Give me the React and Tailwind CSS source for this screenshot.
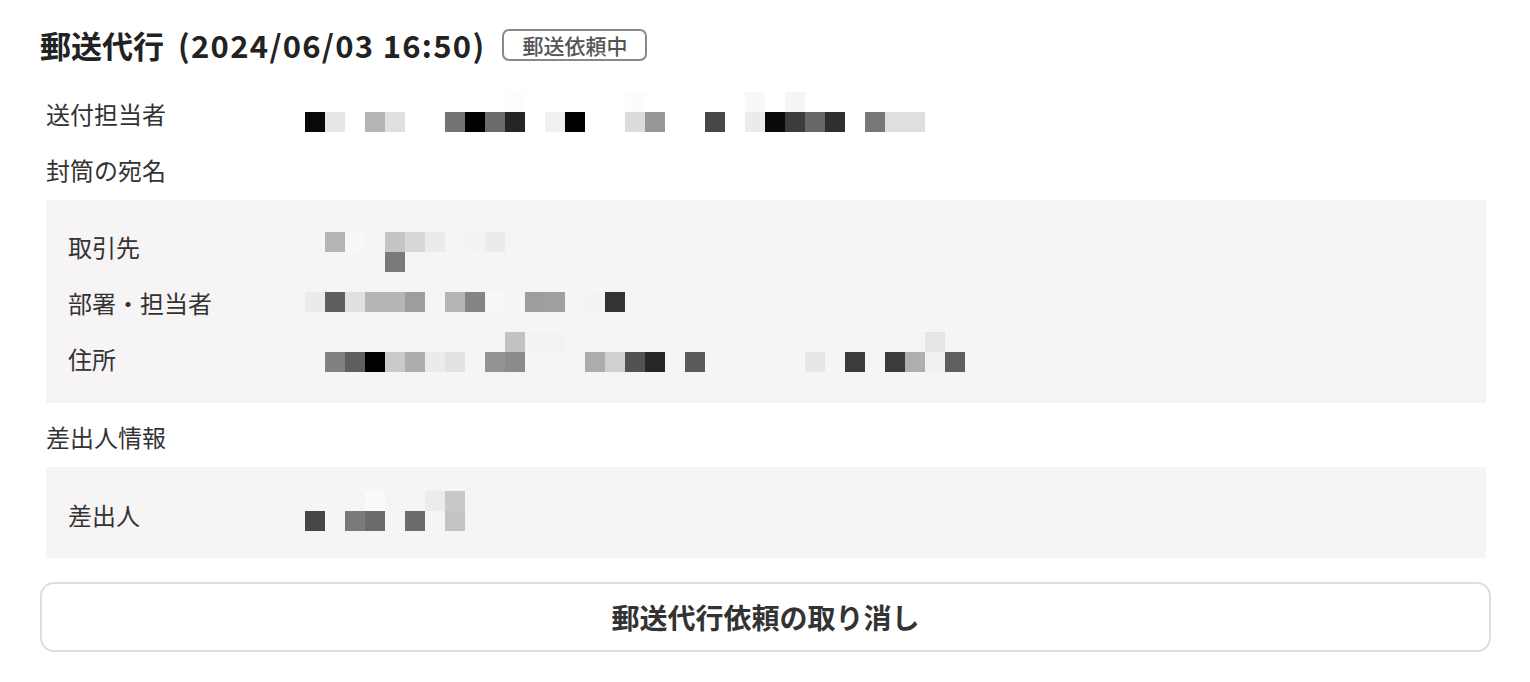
import React from "react";

// mosaic cells, 20px each, null = empty
const sender = [
  [null, null, null, null, null, null, null, null, null, null, "bg-[#fdfdfd]", null, null, null, null, null, "bg-[#fcfcfc]", null, null, null, null, null, "bg-[#f8f8f8]", null, "bg-[#f5f5f5]"],
  ["bg-[#080808]", "bg-[#e6e6e6]", null, "bg-[#b5b5b5]", "bg-[#e0e0e0]", null, null, "bg-[#747474]", "bg-[#000000]", "bg-[#6b6b6b]", "bg-[#252525]", null, "bg-[#f0f0f0]", "bg-[#000000]", null, null, "bg-[#dcdcdc]", "bg-[#979797]", null, null, "bg-[#474747]", null, "bg-[#ebebeb]", "bg-[#0a0a0a]", "bg-[#3c3c3c]", "bg-[#676767]", "bg-[#2f2f2f]", null, "bg-[#777777]", "bg-[#dfdfdf]", "bg-[#dfdfdf]"],
];

const client = [
  [null, "bg-[#b5b5b5]", "bg-[#f7f7f7]", null, "bg-[#c5c5c5]", "bg-[#d7d7d7]", "bg-[#ebebeb]", null, "bg-[#f3f3f3]", "bg-[#ebebeb]"],
  [null, null, null, null, "bg-[#7a7a7a]"],
];

const dept = [
  ["bg-[#ebebeb]", "bg-[#5f5f5f]", "bg-[#e0e0e0]", "bg-[#b5b5b5]", "bg-[#b5b5b5]", "bg-[#9d9d9d]", null, "bg-[#b5b5b5]", "bg-[#858585]", "bg-[#f7f7f7]", null, "bg-[#9d9d9d]", "bg-[#a0a0a0]", null, "bg-[#f3f3f3]", "bg-[#333333]"],
];

const address = [
  [null, null, null, null, null, null, null, null, null, null, "bg-[#c2c2c2]", "bg-[#f3f3f3]", "bg-[#f3f3f3]", null, null, null, null, null, null, null, null, null, null, null, null, null, null, null, null, null, null, "bg-[#e5e5e5]"],
  [null, "bg-[#818181]", "bg-[#5f5f5f]", "bg-[#000000]", "bg-[#cacaca]", "bg-[#adadad]", "bg-[#ebebeb]", "bg-[#e2e2e2]", null, "bg-[#939393]", "bg-[#8b8b8b]", null, null, null, "bg-[#acacac]", "bg-[#d0d0d0]", "bg-[#525252]", "bg-[#262626]", null, "bg-[#5a5a5a]", null, null, null, null, null, "bg-[#e7e7e7]", null, "bg-[#3b3b3b]", null, "bg-[#3b3b3b]", "bg-[#afafaf]", "bg-[#f0f0f0]", "bg-[#606060]"],
];

const fromPerson = [
  [null, null, null, "bg-[#fafafa]", null, "bg-[#f5f5f5]", "bg-[#ececec]", "bg-[#c8c8c8]"],
  ["bg-[#474747]", null, "bg-[#7a7a7a]", "bg-[#6b6b6b]", null, "bg-[#6b6b6b]", null, "bg-[#c4c4c4]"],
];

const Mosaic = ({ rows, className }) => (
  <div className={`flex flex-col ${className}`}>
    {rows.map((row, i) => (
      <div key={i} className="flex h-5">
        {row.map((c, j) => (
          <div key={j} className={`w-5 h-5 ${c || ""}`} />
        ))}
      </div>
    ))}
  </div>
);

const Row = ({ label, labelWidth, rows, offset }) => (
  <div className="flex items-start h-14">
    <div className={`${labelWidth} shrink-0 leading-[52px]`}>{label}</div>
    <Mosaic rows={rows} className={offset} />
  </div>
);

const App = () => {
  return (
    <div
      className="bg-white w-[1530px] h-[682px] px-10 pt-[29px] text-[#333] text-[24px]"
      style={{ fontFamily: '"Noto Sans CJK JP", "Noto Sans", sans-serif' }}
    >
      <div className="flex items-center gap-[17px] h-8">
        <h1 className="text-[31px] font-bold text-[#222] leading-8 flex">
          <span>郵送代行</span>
          <span className="ml-[14px] tracking-[1.3px]">(2024/06/03 16:50)</span>
        </h1>
        <span className="h-8 w-[145px] flex items-center justify-center border-2 border-[#888] rounded-[7px] text-[21px] font-medium text-[#555] leading-none">
          郵送依頼中
        </span>
      </div>

      <div className="mt-[27px] pl-[6px]">
        <Row label="送付担当者" labelWidth="w-[259px]" rows={sender} offset="mt-[4px]" />
        <div className="h-14 leading-[52px]">封筒の宛名</div>

        <div className="w-[1440px] bg-[#f6f4f5] pl-[22px] pt-[21px] pb-[14px]">
          <Row label="取引先" labelWidth="w-[237px]" rows={client} offset="mt-[11px]" />
          <Row label="部署・担当者" labelWidth="w-[237px]" rows={dept} offset="mt-[15px]" />
          <Row label="住所" labelWidth="w-[237px]" rows={address} offset="mt-[-1px]" />
        </div>

        <div className="h-14 mt-2 leading-[52px]">差出人情報</div>

        <div className="w-[1440px] bg-[#f6f4f5] pl-[22px] pt-[22px] pb-[13px]">
          <Row label="差出人" labelWidth="w-[237px]" rows={fromPerson} offset="mt-[2px]" />
        </div>
      </div>

      <button className="mt-6 w-[1451px] h-[70px] flex items-center justify-center border-2 border-[#dedede] rounded-[14px] bg-white text-[28px] font-bold text-[#333]">
        郵送代行依頼の取り消し
      </button>
    </div>
  );
};

export default App;
